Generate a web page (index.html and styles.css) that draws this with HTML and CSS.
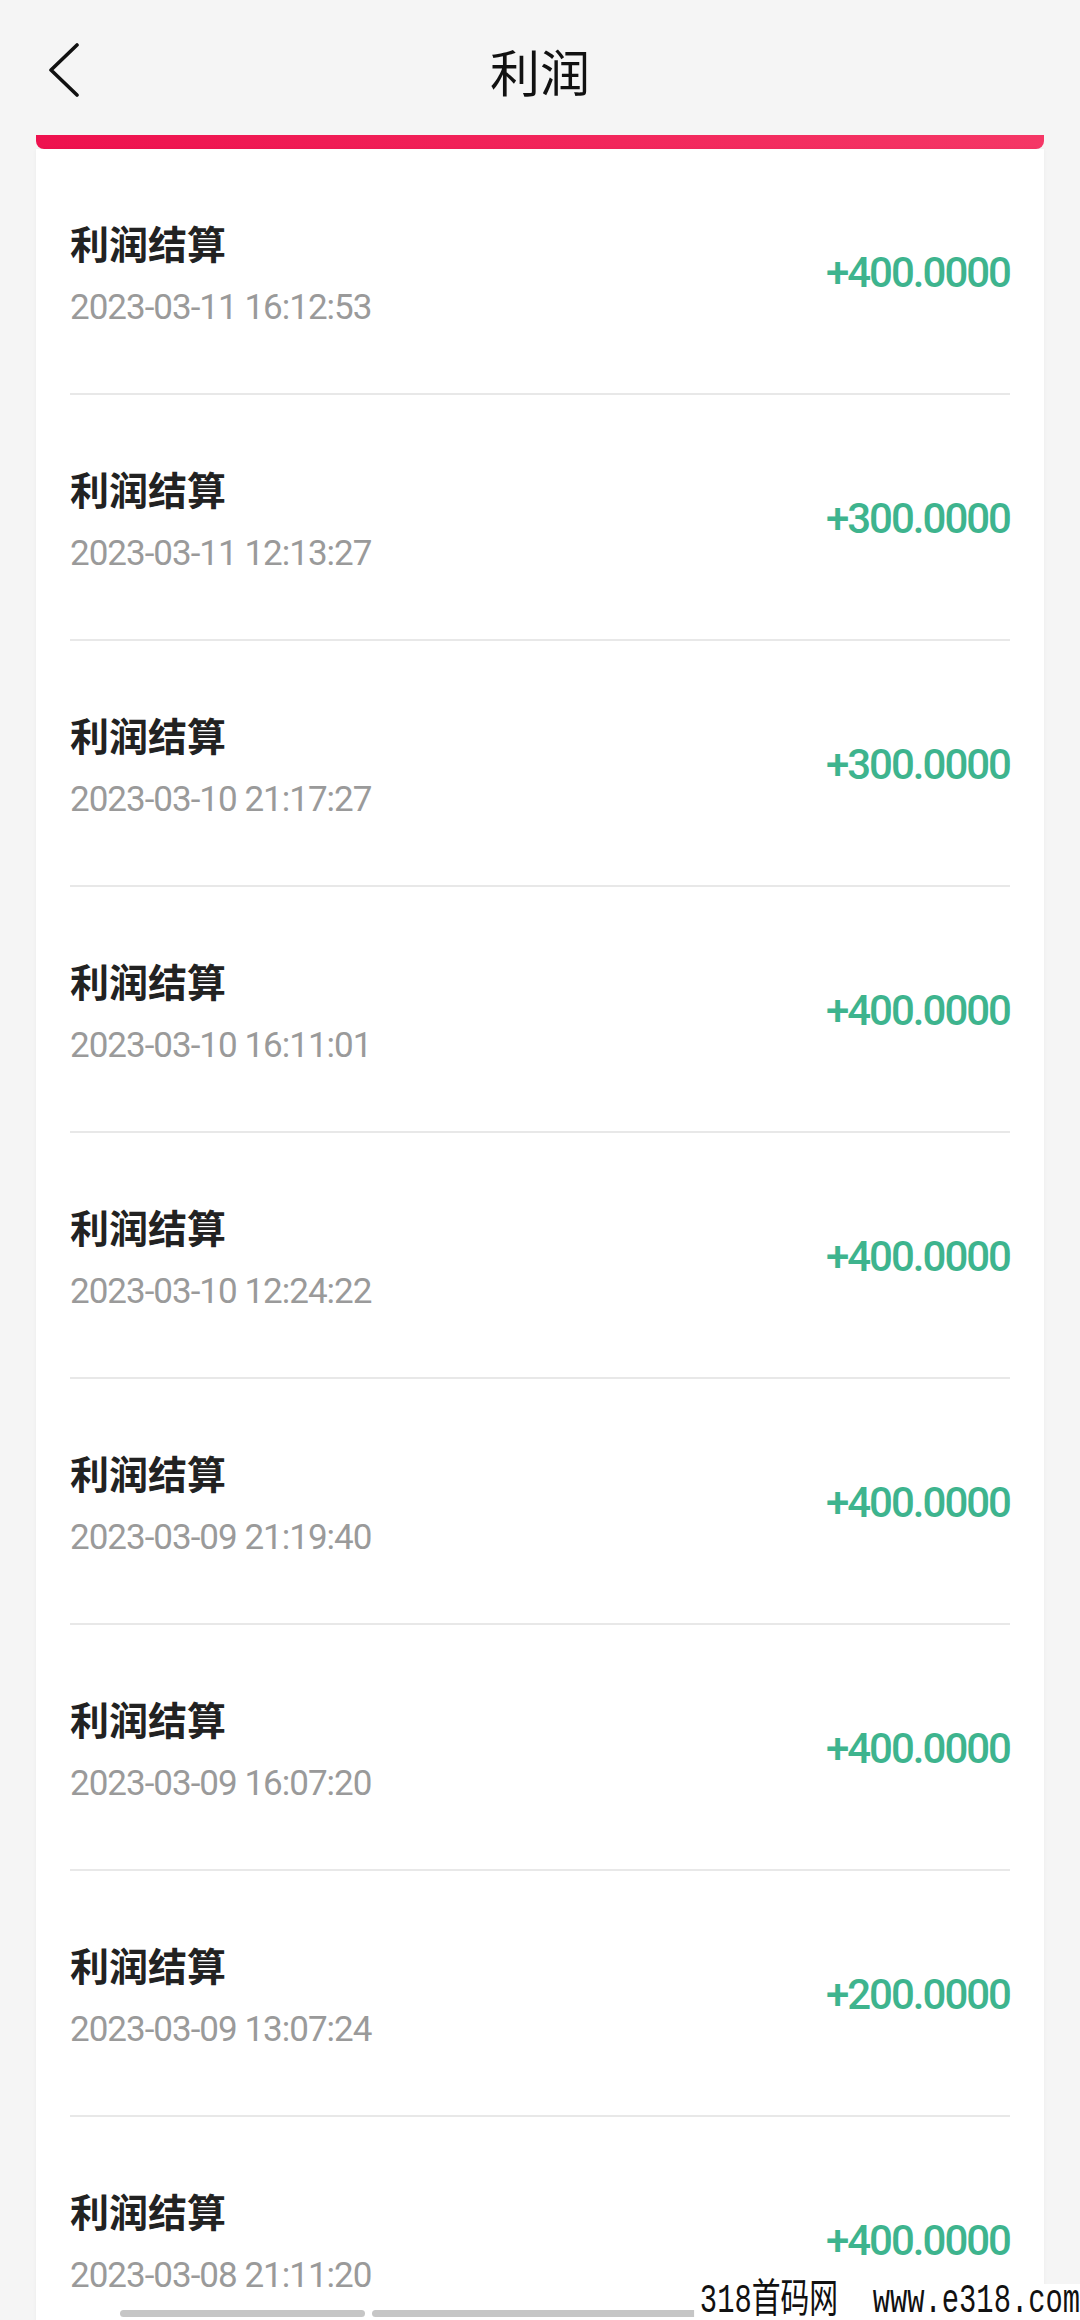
FILE: index.html
```html
<!DOCTYPE html>
<html lang="zh-CN">
<head>
    <meta charset="UTF-8">
    <meta name="viewport" content="width=device-width, initial-scale=1.0">
    <title>利润</title>
    <link rel="stylesheet" href="styles.css">
</head>
<body>
    <div class="header">
        <div class="back">
            <svg width="34" height="54" viewBox="0 0 34 54">
                <path d="M29 2 L3 27 L29 52" fill="none" stroke="#111" stroke-width="3.6" stroke-linecap="round" stroke-linejoin="round"/>
            </svg>
        </div>
        <h1 class="title">利润</h1>
        <div></div>
    </div>

    <div class="slot"></div>

    <div class="card">
        <div class="row">
            <div class="info">
                <div class="name">利润结算</div>
                <div class="time">2023-03-11 16:12:53</div>
            </div>
            <div class="amount">+400.0000</div>
        </div>
        <div class="row">
            <div class="info">
                <div class="name">利润结算</div>
                <div class="time">2023-03-11 12:13:27</div>
            </div>
            <div class="amount">+300.0000</div>
        </div>
        <div class="row">
            <div class="info">
                <div class="name">利润结算</div>
                <div class="time">2023-03-10 21:17:27</div>
            </div>
            <div class="amount">+300.0000</div>
        </div>
        <div class="row">
            <div class="info">
                <div class="name">利润结算</div>
                <div class="time">2023-03-10 16:11:01</div>
            </div>
            <div class="amount">+400.0000</div>
        </div>
        <div class="row">
            <div class="info">
                <div class="name">利润结算</div>
                <div class="time">2023-03-10 12:24:22</div>
            </div>
            <div class="amount">+400.0000</div>
        </div>
        <div class="row">
            <div class="info">
                <div class="name">利润结算</div>
                <div class="time">2023-03-09 21:19:40</div>
            </div>
            <div class="amount">+400.0000</div>
        </div>
        <div class="row">
            <div class="info">
                <div class="name">利润结算</div>
                <div class="time">2023-03-09 16:07:20</div>
            </div>
            <div class="amount">+400.0000</div>
        </div>
        <div class="row">
            <div class="info">
                <div class="name">利润结算</div>
                <div class="time">2023-03-09 13:07:24</div>
            </div>
            <div class="amount">+200.0000</div>
        </div>
        <div class="row">
            <div class="info">
                <div class="name">利润结算</div>
                <div class="time">2023-03-08 21:11:20</div>
            </div>
            <div class="amount">+400.0000</div>
        </div>
    </div>

    <div class="scroll-bars">
        <span class="bar short"></span>
        <span class="bar long"></span>
    </div>

    <div class="watermark">318首码网  www.e318.com</div>
</body>
</html>
```

FILE: styles.css
```css
body {
    margin: 0;
    height: 2320px;
    overflow: hidden;
    position: relative;
    background-color: #f5f5f5;
    font-family: Roboto, "Noto Sans CJK SC", sans-serif;
}

.header {
    box-sizing: border-box;
    height: 130px;
    padding: 10px 48px 0;
    display: grid;
    grid-template-columns: 1fr auto 1fr;
    align-items: center;
}

.back {
    display: flex;
    align-items: center;
}

.back svg {
    display: block;
}

.title {
    margin: 0;
    font-family: "Noto Sans CJK SC", sans-serif;
    font-size: 50px;
    font-weight: 400;
    line-height: 60px;
    color: #111;
}

.slot {
    margin: 5px 36px 0;
    height: 14px;
    border-radius: 0 0 8px 8px;
    background: linear-gradient(90deg, #ee114e, #f53766);
}

.card {
    margin: 0 36px;
    padding: 0 34px;
    background: white;
    box-shadow: 0 0 4px rgba(0, 0, 0, 0.04);
}

.row {
    box-sizing: border-box;
    height: 246px;
    padding-top: 6px;
    display: flex;
    justify-content: space-between;
    align-items: center;
    border-bottom: 2px solid #e8e8e8;
}

.name {
    font-family: "Noto Sans CJK SC", sans-serif;
    font-size: 39px;
    font-weight: 700;
    line-height: 46px;
    color: #222;
}

.time {
    margin-top: 22px;
    font-size: 35px;
    line-height: 42px;
    letter-spacing: -1px;
    color: #9a9a9a;
}

.amount {
    margin-bottom: 3px;
    font-size: 42px;
    font-weight: 500;
    line-height: 50px;
    letter-spacing: -2px;
    color: #3eb48e;
}

.scroll-bars {
    position: absolute;
    left: 120px;
    top: 2310px;
    display: flex;
    gap: 7px;
}

.bar {
    height: 7px;
    border-radius: 4px;
    background-color: #c6c6c6;
}

.bar.short {
    width: 245px;
}

.bar.long {
    width: 640px;
}

.watermark {
    position: absolute;
    right: 0;
    bottom: 0;
    width: max-content;
    height: 36px;
    padding-left: 8px;
    background: white;
    white-space: pre;
    font-family: "Liberation Mono", "Noto Sans CJK SC", monospace;
    font-size: 40px;
    line-height: 36px;
    color: #111;
    transform: scaleX(0.72);
    transform-origin: right bottom;
}
```
